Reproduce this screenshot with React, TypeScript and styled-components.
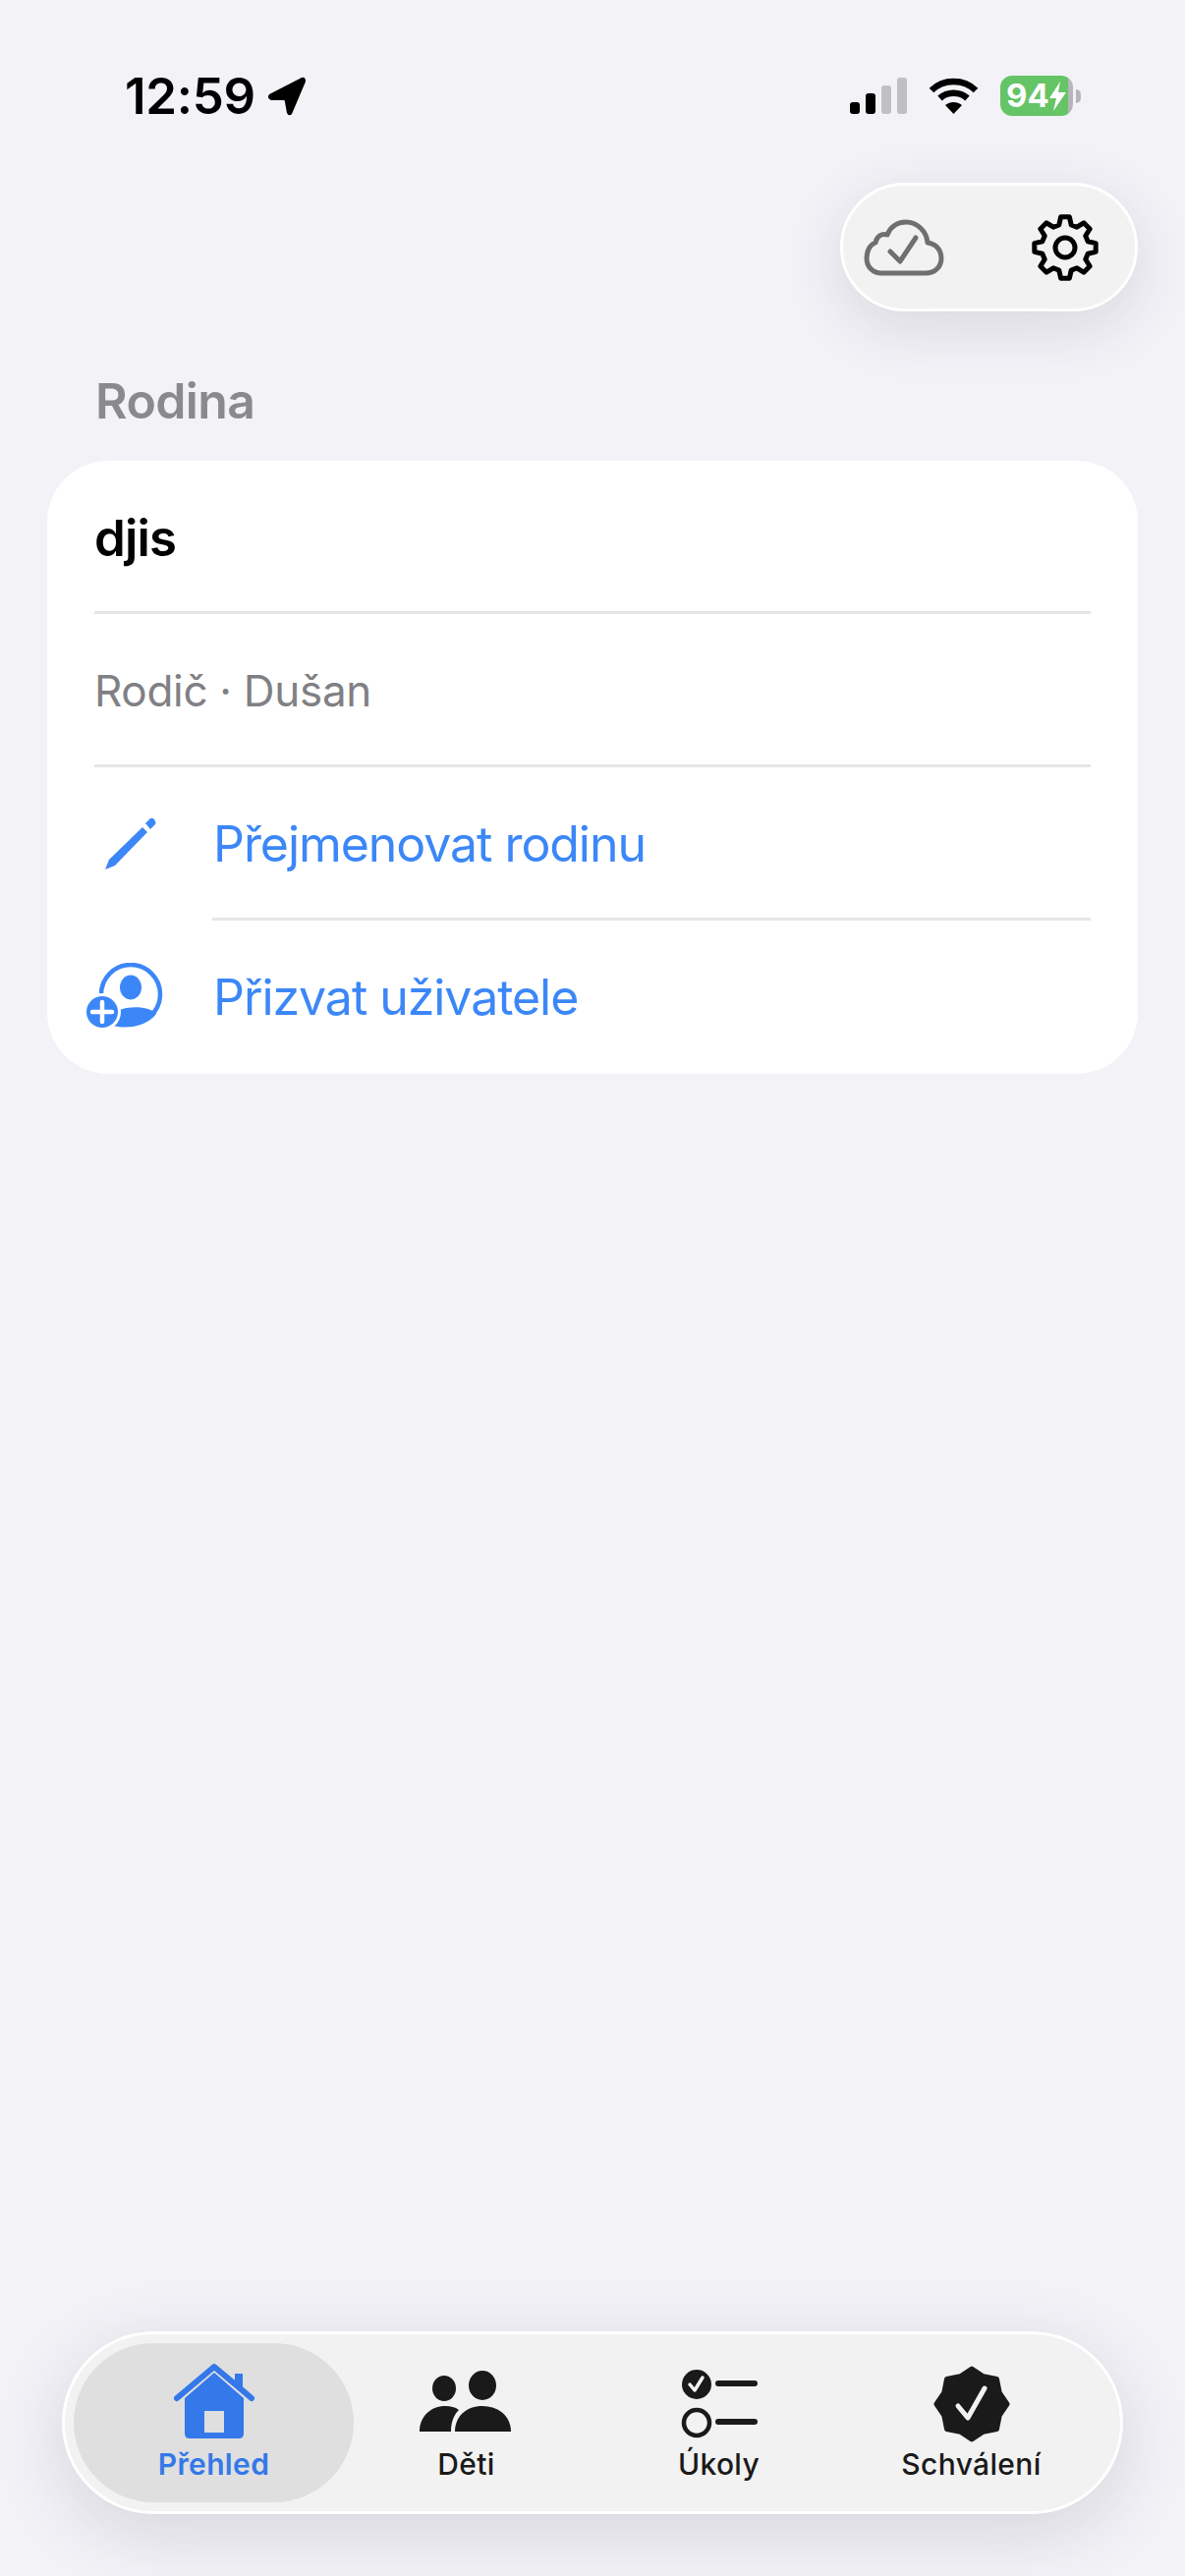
import React from "react";
import styled, { createGlobalStyle } from "styled-components";

const Global = createGlobalStyle`
  html, body { margin: 0; padding: 0; background: #f2f2f7; }
  * { box-sizing: border-box; }
  body { font-family: Inter, "Noto Sans", "Liberation Sans", sans-serif; -webkit-font-smoothing: antialiased; }
`;

const Page = styled.div`
  width: 1206px;
  height: 2622px;
  background: #f2f2f7;
  display: flex;
  flex-direction: column;
  overflow: hidden;
`;

const StatusBar = styled.div`
  display: flex;
  justify-content: space-between;
  align-items: center;
  height: 41px;
  margin-top: 77px;
  padding: 0 106px 0 127px;
`;

const StatusLeft = styled.div`
  display: flex;
  align-items: center;
  gap: 12px;
`;

const Time = styled.span`
  font-size: 51px;
  font-weight: 600;
  line-height: 41px;
  color: #000;
  letter-spacing: -0.3px;
`;

const StatusRight = styled.div`
  display: flex;
  align-items: center;
  gap: 22px;
`;

const Battery = styled.div`
  display: flex;
  align-items: center;
  position: relative;
  width: 82px;
  height: 41px;
`;

const BatteryBody = styled.div`
  width: 74px;
  height: 41px;
  border-radius: 12px;
  background: linear-gradient(90deg, #65c466 0 93%, #b5b5ba 93% 100%);
  display: flex;
  align-items: center;
  padding-left: 6px;
`;

const BatteryText = styled.span`
  color: #fff;
  font-size: 33px;
  font-weight: 700;
  line-height: 41px;
`;

const BatteryNub = styled.div`
  width: 5px;
  height: 14px;
  margin-left: 3px;
  background: #b5b5ba;
  border-radius: 0 7px 7px 0;
`;

const Actions = styled.div`
  align-self: flex-end;
  margin: 68px 48px 0 0;
  width: 303px;
  height: 131px;
  border-radius: 66px;
  background: #f2f2f2;
  border: 3px solid #fff;
  box-shadow: 0 16px 60px rgba(60, 60, 80, 0.14);
  display: flex;
  align-items: center;
  justify-content: space-between;
  padding: 0 33px 0 21px;
`;

const SectionTitle = styled.h2`
  margin: 63px 0 0 97px;
  height: 57px;
  font-size: 50px;
  line-height: 57px;
  font-weight: 600;
  color: #8a8a8e;
  letter-spacing: -0.6px;
`;

const Card = styled.section`
  margin: 32px 48px 0;
  height: 624px;
  border-radius: 62px;
  background: #fff;
  display: flex;
  flex-direction: column;
  padding: 0 48px;
`;

const Row = styled.div<{ $divider?: number }>`
  height: 156px;
  display: flex;
  align-items: center;
  position: relative;
  flex: none;
  ${(p) =>
    p.$divider !== undefined
      ? `&::after { content: ""; position: absolute; left: ${p.$divider}px; right: 0; bottom: 0; height: 3px; background: #e6e6e8; }`
      : ""}
`;

const FamilyName = styled.span`
  font-size: 51px;
  font-weight: 600;
  color: #000;
  letter-spacing: -0.8px;
`;

const Member = styled.span`
  font-size: 44px;
  font-weight: 400;
  color: #808084;
  letter-spacing: -0.3px;
`;

const IconSlot = styled.span`
  width: 121px;
  flex: none;
  display: flex;
  position: relative;
  height: 80px;
  align-items: center;
`;

const LinkText = styled.span`
  font-size: 50px;
  font-weight: 400;
  color: #3c87f7;
  letter-spacing: -1.05px;
`;

const TabBar = styled.nav`
  margin: auto 0 63px 63px;
  width: 1080px;
  height: 186px;
  border-radius: 93px;
  background: #f2f2f2;
  border: 3px solid #fff;
  box-shadow: 0 18px 70px rgba(60, 60, 80, 0.16);
  display: grid;
  grid-template-columns: repeat(4, 257px);
  padding: 9px 0 9px 23px;
`;

const Tab = styled.div<{ $active?: boolean }>`
  position: relative;
  display: flex;
  flex-direction: column;
  align-items: center;
  padding-top: 20px;
  color: ${(p) => (p.$active ? "#3478e9" : "#1a1a1a")};
  ${(p) =>
    p.$active
      ? `&::before { content: ""; position: absolute; inset: 0 -14px; border-radius: 81px; background: #dfdfdf; }`
      : ""}
  & > * { position: relative; }
`;

const TabIcon = styled.svg`
  height: 84px;
  width: 100px;
  display: block;
`;

const TabLabel = styled.span<{ $active?: boolean }>`
  font-size: 30px;
  line-height: 36px;
  font-weight: ${(p) => (p.$active ? 600 : 450)};
  letter-spacing: 0.35px;
  margin-top: 1px;
`;

const gearPath = (() => {
  const pts: string[] = [];
  const c = 38;
  const pt = (r: number, deg: number) => {
    const a = (deg * Math.PI) / 180;
    return `${(c + r * Math.cos(a)).toFixed(2)} ${(c + r * Math.sin(a)).toFixed(2)}`;
  };
  for (let i = 0; i < 8; i++) {
    const a = i * 45 - 90;
    pts.push(pt(24, a - 15), pt(31.5, a - 8), pt(31.5, a + 8), pt(24, a + 15));
  }
  return `M${pts.join(" L")} Z`;
})();

const badgePath = (() => {
  const pts: string[] = [];
  const c = 42;
  for (let i = 0; i < 16; i++) {
    const a = ((i * 22.5 - 90) * Math.PI) / 180;
    const r = i % 2 === 0 ? 36 : 30.5;
    pts.push(`${(c + r * Math.cos(a)).toFixed(2)} ${(c + r * Math.sin(a)).toFixed(2)}`);
  }
  return `M${pts.join(" L")} Z`;
})();

export default function App() {
  return (
    <Page>
      <Global />
      <StatusBar>
        <StatusLeft>
          <Time>12:59</Time>
          <svg width="40" height="40" viewBox="0 0 40 40">
            <path d="M35 1 L2 18 Q-1 22 4 24 L17 24 Q18 24 18 26 L20 37 Q22 41 25 38 L39 5 Q39 0 35 1 Z" fill="#000" />
          </svg>
        </StatusLeft>
        <StatusRight>
          <svg width="58" height="37" viewBox="0 0 58 37">
            <rect x="0" y="25" width="10" height="12" rx="3" fill="#000" />
            <rect x="16" y="16" width="10" height="21" rx="3" fill="#000" />
            <rect x="32" y="8" width="10" height="29" rx="3" fill="#bfbfc4" />
            <rect x="48" y="0" width="10" height="37" rx="3" fill="#bfbfc4" />
          </svg>
          <svg width="51" height="37" viewBox="0 0 51 37">
            <path d="M3 13 C15 1 36 1 48 13" fill="none" stroke="#000" strokeWidth="6.5" />
            <path d="M11.5 21 C19 14 32 14 39.5 21" fill="none" stroke="#000" strokeWidth="6.5" />
            <path d="M25.5 37 L17 28 C22 24 29 24 34 28 Z" fill="#000" />
          </svg>
          <Battery>
            <BatteryBody>
              <BatteryText>94</BatteryText>
              <svg width="17" height="30" viewBox="0 0 17 30">
                <path d="M11 0 L0 17 L7 17 L4 30 L17 11 L9 11 Z" fill="#fff" />
              </svg>
            </BatteryBody>
            <BatteryNub />
          </Battery>
        </StatusRight>
      </StatusBar>

      <Actions>
        <svg width="82" height="58" viewBox="0 0 82 58" fill="none" stroke="#6f6f6f" strokeWidth="5" strokeLinecap="round" strokeLinejoin="round">
          <path d="M18 55 H63 C73 55 79 48 79 40 C79 31 73 25 65 24 C64 12 54 3 43 3 C34 3 27 8 24 16 C18 14 13 18 12 24 C6 26 3 33 3 40 C3 48 9 55 18 55 Z" />
          <path d="M27 33 L37 43 L53 19" />
        </svg>
        <svg width="76" height="76" viewBox="0 0 76 76" fill="none" stroke="#000" strokeWidth="5" strokeLinejoin="round">
          <path d={gearPath} />
          <circle cx="38" cy="38" r="10" />
        </svg>
      </Actions>

      <SectionTitle>Rodina</SectionTitle>
      <Card>
        <Row $divider={0}>
          <FamilyName>djis</FamilyName>
        </Row>
        <Row $divider={0}>
          <Member>Rodič · Dušan</Member>
        </Row>
        <Row $divider={120}>
          <IconSlot>
            <svg width="54" height="54" viewBox="0 0 54 54" fill="#3c87f7" style={{ marginLeft: 9 }}>
              <path d="M2 53 L6 43 L40 10 L45 15 L12 49 Z" />
              <path d="M43 6 L48 1 Q50 0 52 2 L53 4 Q54 6 53 7 L48 12 Z" />
            </svg>
          </IconSlot>
          <LinkText>Přejmenovat rodinu</LinkText>
        </Row>
        <Row>
          <IconSlot>
            <svg width="80" height="70" viewBox="0 0 80 70" style={{ marginLeft: -9 }}>
              <circle cx="46" cy="32" r="30" fill="none" stroke="#3c87f7" strokeWidth="4.5" />
              <ellipse cx="46" cy="25" rx="11" ry="12.5" fill="#3c87f7" />
              <path d="M20 60 C28 42 64 42 72 52 C62 66 34 70 20 60 Z" fill="#3c87f7" />
              <circle cx="17" cy="50" r="19" fill="#fff" />
              <circle cx="17" cy="50" r="16" fill="#3c87f7" />
              <path d="M7 50 H27 M17 40 V60" stroke="#fff" strokeWidth="4.5" strokeLinecap="round" />
            </svg>
          </IconSlot>
          <LinkText>Přizvat uživatele</LinkText>
        </Row>
      </Card>

      <TabBar>
        <Tab $active>
          <TabIcon viewBox="0 0 100 84">
            <path d="M20 36 L50 10 L80 36 V72 Q80 77 75 77 H25 Q20 77 20 72 Z M40 49 V71 H60 V49 Z" fill="#3478e9" fillRule="evenodd" />
            <path d="M12 36 L50 4 L88 36" fill="none" stroke="#3478e9" strokeWidth="6" strokeLinecap="round" strokeLinejoin="round" />
            <path d="M71 22 V11 H79 V29 Z" fill="#3478e9" />
          </TabIcon>
          <TabLabel $active>Přehled</TabLabel>
        </Tab>
        <Tab>
          <TabIcon viewBox="4 0 100 84">
            <ellipse cx="31" cy="26" rx="12" ry="13" fill="currentColor" />
            <ellipse cx="70" cy="23" rx="14" ry="15" fill="currentColor" />
            <path d="M6 70 C6 54 18 44 32 44 C38 44 42 45 46 48 C40 54 38 62 38 70 Z" fill="currentColor" />
            <path d="M42 70 C42 54 54 44 70 44 C86 44 99 54 99 70 Z" fill="currentColor" />
          </TabIcon>
          <TabLabel>Děti</TabLabel>
        </Tab>
        <Tab>
          <TabIcon viewBox="0 0 100 84">
            <circle cx="27" cy="22" r="15" fill="currentColor" />
            <path d="M20 22 L25 28 L33 15" fill="none" stroke="#f2f2f2" strokeWidth="3.5" strokeLinecap="round" strokeLinejoin="round" />
            <circle cx="27" cy="61" r="13" fill="none" stroke="currentColor" strokeWidth="4.5" />
            <path d="M49 21 H86 M49 60 H86" stroke="currentColor" strokeWidth="6" strokeLinecap="round" />
          </TabIcon>
          <TabLabel>Úkoly</TabLabel>
        </Tab>
        <Tab>
          <TabIcon viewBox="0 0 84 84" style={{ width: 84 }}>
            <path d={badgePath} fill="currentColor" stroke="currentColor" strokeWidth="5" strokeLinejoin="round" />
            <path d="M28 44 L38 56 L55 26" fill="none" stroke="#f2f2f2" strokeWidth="5" strokeLinecap="round" strokeLinejoin="round" />
          </TabIcon>
          <TabLabel>Schválení</TabLabel>
        </Tab>
      </TabBar>
    </Page>
  );
}
